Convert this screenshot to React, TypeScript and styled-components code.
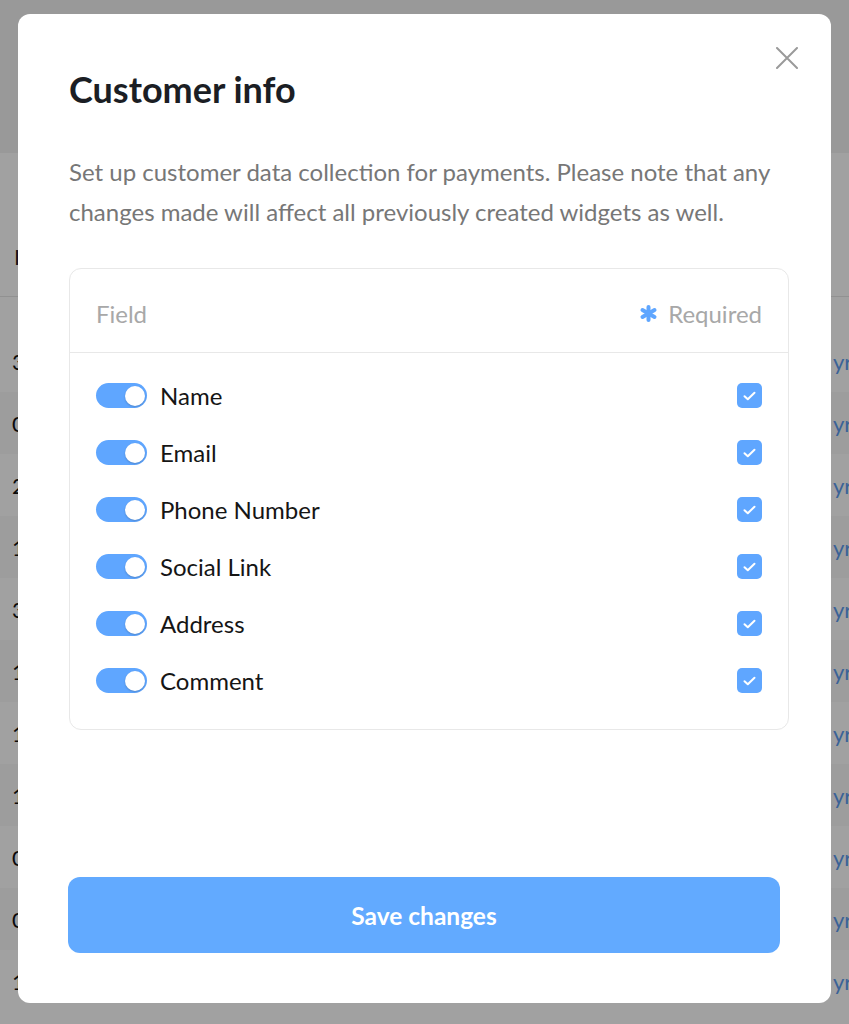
import React, { useState } from "react";
import styled, { createGlobalStyle } from "styled-components";

const GlobalStyle = createGlobalStyle`
  * { box-sizing: border-box; }
  html, body { margin: 0; padding: 0; }
  body {
    font-family: "Lato", "Liberation Sans", sans-serif;
    background: #ffffff;
    overflow: hidden;
  }
`;

const Page = styled.div`
  width: 849px;
  height: 1024px;
  overflow: hidden;
  background: #ffffff;
`;

const TopBar = styled.div`
  height: 153px;
  background: #f3f3f3;
`;

const TableHead = styled.div`
  height: 144px;
  display: flex;
  align-items: flex-end;
  padding: 0 0 26px 14px;
  border-bottom: 1px solid #e6e6e6;
  font-size: 22px;
  color: #222;
`;

const TableBody = styled.div`
  padding-top: 33px;
`;

const BgRow = styled.div<{ $alt: boolean }>`
  height: 62px;
  display: flex;
  align-items: center;
  justify-content: space-between;
  background: ${(p) => (p.$alt ? "#f9f9f9" : "#ffffff")};
  font-size: 22px;
  color: #111;
  padding-left: 12px;
`;

const BgLink = styled.span`
  width: 16px;
  white-space: nowrap;
  color: #5d9cf0;
`;

const Overlay = styled.div`
  position: fixed;
  inset: 0;
  background: rgba(0, 0, 0, 0.37);
`;

const Modal = styled.div`
  position: fixed;
  left: 18px;
  top: 14px;
  width: 813px;
  height: 989px;
  background: #ffffff;
  border-radius: 12px;
  padding: 53px 51px 50px 51px;
  display: flex;
  flex-direction: column;
`;

const CloseButton = styled.button`
  position: absolute;
  top: 33px;
  right: 33px;
  width: 22px;
  height: 22px;
  padding: 0;
  border: none;
  background: none;
  cursor: pointer;
  display: flex;
`;

const Title = styled.h2`
  margin: 0;
  font-size: 36px;
  font-weight: 700;
  color: #1b1e24;
  line-height: 44px;
`;

const Description = styled.p`
  margin: 41px 0 0 0;
  font-size: 24px;
  line-height: 40px;
  color: #777777;
`;

const Card = styled.div`
  margin: 36px -9px 0 0;
  border: 1px solid #e8e8e8;
  border-radius: 12px;
`;

const CardHead = styled.div`
  height: 84px;
  display: flex;
  align-items: center;
  justify-content: space-between;
  padding: 5px 26px 0 26px;
  border-bottom: 1px solid #e8e8e8;
  font-size: 24px;
  color: #a8a8a8;
`;

const RequiredLabel = styled.span`
  display: flex;
  align-items: center;
  gap: 10px;
`;

const CardBody = styled.div`
  padding: 14px 26px 20px 26px;
`;

const FieldRow = styled.div`
  height: 57px;
  display: flex;
  align-items: center;
`;

const Toggle = styled.span<{ $on: boolean }>`
  position: relative;
  width: 51px;
  height: 25px;
  border-radius: 13px;
  background: ${(p) => (p.$on ? "#5fa6ff" : "#d6d6d6")};
  cursor: pointer;
  flex-shrink: 0;

  &::after {
    content: "";
    position: absolute;
    top: 2.5px;
    left: ${(p) => (p.$on ? "29px" : "2px")};
    width: 20px;
    height: 20px;
    border-radius: 50%;
    background: #ffffff;
    box-shadow: 0 1px 2px rgba(0, 0, 0, 0.2);
  }
`;

const FieldName = styled.span`
  margin-left: 13px;
  font-size: 24px;
  color: #151515;
  flex: 1;
`;

const Check = styled.span<{ $on: boolean }>`
  width: 25px;
  height: 25px;
  border-radius: 5px;
  background: ${(p) => (p.$on ? "#5fa6ff" : "#ffffff")};
  border: ${(p) => (p.$on ? "none" : "1px solid #ccc")};
  display: flex;
  align-items: center;
  justify-content: center;
  cursor: pointer;
`;

const Spacer = styled.div`
  flex: 1;
`;

const SaveButton = styled.button`
  margin-left: -1px;
  height: 76px;
  border: none;
  border-radius: 12px;
  background: #62aaff;
  color: #ffffff;
  font-family: inherit;
  font-size: 24.5px;
  font-weight: 700;
  cursor: pointer;
`;

const fields = ["Name", "Email", "Phone Number", "Social Link", "Address", "Comment"];
const bgDigits = ["3", "0", "2", "1", "3", "1", "1", "1", "0", "0", "1"];

function Asterisk() {
  return (
    <svg width="19" height="17" viewBox="0 0 19 17">
      <g stroke="#5fa6ff" strokeWidth="4" strokeLinecap="round">
        <line x1="9.5" y1="2" x2="9.5" y2="15" />
        <line x1="3.5" y1="5" x2="15.5" y2="12" />
        <line x1="3.5" y1="12" x2="15.5" y2="5" />
      </g>
    </svg>
  );
}

export default function App() {
  const [enabled, setEnabled] = useState(fields.map(() => true));
  const [required, setRequired] = useState(fields.map(() => true));

  const flip = (list: boolean[], i: number) => list.map((v, j) => (j === i ? !v : v));

  return (
    <>
      <GlobalStyle />
      <Page>
        <TopBar />
        <TableHead>ID</TableHead>
        <TableBody>
          {bgDigits.map((d, i) => (
            <BgRow key={i} $alt={i % 2 === 1}>
              <span>{d}</span>
              <BgLink>yr</BgLink>
            </BgRow>
          ))}
        </TableBody>
      </Page>
      <Overlay />
      <Modal>
        <CloseButton aria-label="Close">
          <svg width="22" height="22" viewBox="0 0 22 22">
            <path d="M1 1L21 21M21 1L1 21" stroke="#9a9a9a" strokeWidth="2" strokeLinecap="round" />
          </svg>
        </CloseButton>
        <Title>Customer info</Title>
        <Description>
          Set up customer data collection for payments. Please note that any changes made will
          affect all previously created widgets as well.
        </Description>
        <Card>
          <CardHead>
            <span>Field</span>
            <RequiredLabel>
              <Asterisk />
              Required
            </RequiredLabel>
          </CardHead>
          <CardBody>
            {fields.map((f, i) => (
              <FieldRow key={f}>
                <Toggle $on={enabled[i]} onClick={() => setEnabled(flip(enabled, i))} />
                <FieldName>{f}</FieldName>
                <Check $on={required[i]} onClick={() => setRequired(flip(required, i))}>
                  {required[i] && (
                    <svg width="13" height="10" viewBox="0 0 13 10">
                      <path
                        d="M1.5 5.2L4.8 8.3L11.5 1.7"
                        fill="none"
                        stroke="#ffffff"
                        strokeWidth="2"
                        strokeLinecap="round"
                        strokeLinejoin="round"
                      />
                    </svg>
                  )}
                </Check>
              </FieldRow>
            ))}
          </CardBody>
        </Card>
        <Spacer />
        <SaveButton>Save changes</SaveButton>
      </Modal>
    </>
  );
}
